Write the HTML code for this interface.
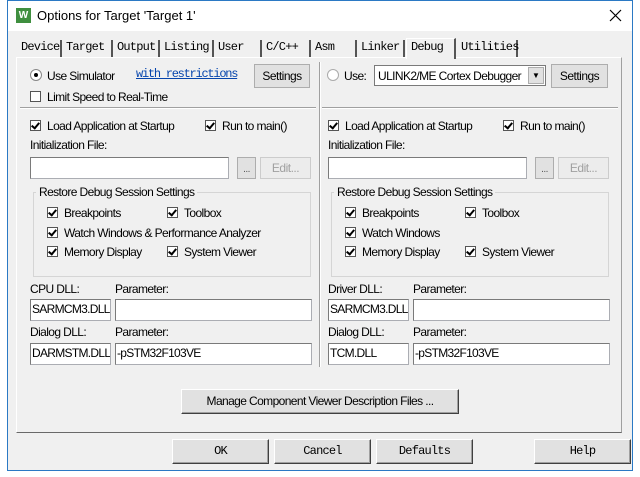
<!DOCTYPE html><html><head><style>
*{margin:0;padding:0;box-sizing:border-box}
body{width:640px;height:477px;background:#fff;position:relative;overflow:hidden;font-family:"Liberation Sans",sans-serif;font-size:12px;color:#000}
.a{position:absolute;white-space:nowrap}
.t{font-size:12px;letter-spacing:-0.6px;line-height:14px}
.m{font-family:"Liberation Mono",monospace;font-size:12px;line-height:14px;letter-spacing:-0.8px}
.in{background:#fff;border:1px solid #abadb3;border-top-color:#7a7a7a;border-left-color:#7a7a7a;position:absolute;padding:2px 1px;font-size:12px;letter-spacing:-0.7px;line-height:15px;overflow:hidden}
.btn{position:absolute;background:#e1e1e1;border:1px solid #adadad;text-align:center;font-size:12px;letter-spacing:-0.5px}
.cb{position:absolute;width:11px;height:11px;border:1px solid #555;background:#fff}
.cb.k::after{content:"";position:absolute;left:2px;top:0px;width:3px;height:6px;border-right:2px solid #000;border-bottom:2px solid #000;transform:rotate(40deg)}
.wb{position:absolute;background:#e1e1e1;border:1px solid #fff;border-right-color:#404040;border-bottom-color:#404040;box-shadow:inset -1px -1px #a0a0a0;text-align:center}
.tab{position:absolute;top:40px;height:17px;border-right:2px solid #555;padding-left:2px}
</style></head><body>
<div class="a" style="left:7px;top:0;width:626px;height:471px;background:#f0f0f0;border:1px solid #2b79c4"></div>
<div class="a" style="left:8px;top:1px;width:624px;height:30px;background:#fff"></div>
<div class="a" style="left:16px;top:8px;width:15px;height:15px;background:#3f8f3f;color:#fff;font-size:10px;font-weight:bold;text-align:center;line-height:15px">W</div>
<div class="a" style="left:37px;top:8px;font-size:13px;letter-spacing:0">Options for Target 'Target 1'</div>
<svg class="a" style="left:609px;top:9px" width="13" height="13"><path d="M1 1L12 12M12 1L1 12" stroke="#000" stroke-width="1.2"/></svg>

<div class="a" style="left:16px;top:57px;width:606px;height:376px;border:1px solid #fff;border-right-color:#a0a0a0;border-bottom-color:#696969"></div>
<div class="a m tab" style="left:19px;width:43px">Device</div>
<div class="a m tab" style="left:64px;width:49px">Target</div>
<div class="a m tab" style="left:115px;width:45px">Output</div>
<div class="a m tab" style="left:162px;width:52px">Listing</div>
<div class="a m tab" style="left:216px;width:46px">User</div>
<div class="a m tab" style="left:264px;width:47px">C/C++</div>
<div class="a m tab" style="left:313px;width:44px">Asm</div>
<div class="a m tab" style="left:359px;width:46px">Linker</div>
<div class="a m" style="left:406px;top:38px;width:50px;height:21px;background:#f0f0f0;border-right:2px solid #555;border-left:1px solid #fff;border-top:1px solid #fff;padding-left:4px;padding-top:1px">Debug</div>
<div class="a m tab" style="left:457px;width:61px;padding-left:4px">Utilities</div>

<div class="a" style="left:319px;top:62px;width:2px;height:305px;border-left:1px solid #a0a0a0;border-right:1px solid #fff"></div>
<div class="a" style="left:20px;top:107px;width:296px;height:2px;border-top:1px solid #a0a0a0;border-bottom:1px solid #fff"></div>
<div class="a" style="left:322px;top:107px;width:296px;height:2px;border-top:1px solid #a0a0a0;border-bottom:1px solid #fff"></div>

<div class="a" style="left:30px;top:69px;width:12px;height:12px;border:1px solid #888;border-radius:50%;background:#fff"><div style="position:absolute;left:3px;top:3px;width:4px;height:4px;border-radius:50%;background:#000"></div></div>
<div class="a t" style="left:47px;top:69px">Use Simulator</div>
<div class="a m" style="left:136px;top:67px;color:#0645ad;text-decoration:underline;letter-spacing:-1.25px">with restrictions</div>
<div class="btn" style="left:254px;top:64px;width:56px;height:24px;line-height:22px">Settings</div>
<div class="cb" style="left:30px;top:91px"></div>
<div class="a t" style="left:47px;top:90px">Limit Speed to Real-Time</div>

<div class="a" style="left:327px;top:69px;width:12px;height:12px;border:1px solid #aaa;border-radius:50%;background:#fff"></div>
<div class="a t" style="left:344px;top:69px">Use:</div>
<div class="a" style="left:374px;top:65px;width:172px;height:21px;background:#fff;border:1px solid #7a7a7a"><span class="t" style="position:absolute;left:3px;top:3px">ULINK2/ME Cortex Debugger</span><div style="position:absolute;right:1px;top:1px;width:16px;height:17px;background:#e1e1e1;border:1px solid #adadad;font-size:8px;text-align:center;line-height:15px">▼</div></div>
<div class="btn" style="left:551px;top:64px;width:57px;height:24px;line-height:22px">Settings</div>

<div class="a" style="left:0;top:0">
<div class="cb k" style="left:30px;top:120px"></div><div class="a t" style="left:47px;top:119px">Load Application at Startup</div>
<div class="cb k" style="left:205px;top:120px"></div><div class="a t" style="left:222px;top:119px">Run to main()</div>
<div class="a t" style="left:30px;top:138px">Initialization File:</div>
<div class="in" style="left:30px;top:157px;width:199px;height:22px"></div>
<div class="btn" style="left:237px;top:157px;width:19px;height:22px;line-height:24px;font-size:10px;color:#555">...</div>
<div class="btn" style="left:260px;top:157px;width:51px;height:22px;line-height:20px;color:#a0a0a0;background:#ececec;border-color:#ccc">Edit...</div>
<div class="a" style="left:33px;top:192px;width:278px;height:85px;border:1px solid #d5d5d5"></div>
<div class="a t" style="left:36px;top:185px;background:#f0f0f0;padding:0 3px">Restore Debug Session Settings</div>
<div class="cb k" style="left:47px;top:207px"></div><div class="a t" style="left:64px;top:206px">Breakpoints</div>
<div class="cb k" style="left:167px;top:207px"></div><div class="a t" style="left:184px;top:206px">Toolbox</div>
<div class="cb k" style="left:47px;top:227px"></div><div class="a t" style="left:64px;top:226px">Watch Windows &amp; Performance Analyzer</div>
<div class="cb k" style="left:47px;top:246px"></div><div class="a t" style="left:64px;top:245px">Memory Display</div>
<div class="cb k" style="left:167px;top:246px"></div><div class="a t" style="left:184px;top:245px">System Viewer</div>
<div class="a t" style="left:30px;top:282px">CPU DLL:</div><div class="a t" style="left:115px;top:282px">Parameter:</div>
<div class="in" style="left:30px;top:299px;width:81px;height:22px">SARMCM3.DLL</div>
<div class="in" style="left:115px;top:299px;width:197px;height:22px"></div>
<div class="a t" style="left:30px;top:325px">Dialog DLL:</div><div class="a t" style="left:115px;top:325px">Parameter:</div>
<div class="in" style="left:30px;top:343px;width:81px;height:22px">DARMSTM.DLL</div>
<div class="in" style="left:115px;top:343px;width:197px;height:22px">-pSTM32F103VE</div>
</div>
<div class="a" style="left:298px;top:0">
<div class="cb k" style="left:30px;top:120px"></div><div class="a t" style="left:47px;top:119px">Load Application at Startup</div>
<div class="cb k" style="left:205px;top:120px"></div><div class="a t" style="left:222px;top:119px">Run to main()</div>
<div class="a t" style="left:30px;top:138px">Initialization File:</div>
<div class="in" style="left:30px;top:157px;width:199px;height:22px"></div>
<div class="btn" style="left:237px;top:157px;width:19px;height:22px;line-height:24px;font-size:10px;color:#555">...</div>
<div class="btn" style="left:260px;top:157px;width:51px;height:22px;line-height:20px;color:#a0a0a0;background:#ececec;border-color:#ccc">Edit...</div>
<div class="a" style="left:33px;top:192px;width:278px;height:85px;border:1px solid #d5d5d5"></div>
<div class="a t" style="left:36px;top:185px;background:#f0f0f0;padding:0 3px">Restore Debug Session Settings</div>
<div class="cb k" style="left:47px;top:207px"></div><div class="a t" style="left:64px;top:206px">Breakpoints</div>
<div class="cb k" style="left:167px;top:207px"></div><div class="a t" style="left:184px;top:206px">Toolbox</div>
<div class="cb k" style="left:47px;top:227px"></div><div class="a t" style="left:64px;top:226px">Watch Windows</div>
<div class="cb k" style="left:47px;top:246px"></div><div class="a t" style="left:64px;top:245px">Memory Display</div>
<div class="cb k" style="left:167px;top:246px"></div><div class="a t" style="left:184px;top:245px">System Viewer</div>
<div class="a t" style="left:30px;top:282px">Driver DLL:</div><div class="a t" style="left:115px;top:282px">Parameter:</div>
<div class="in" style="left:30px;top:299px;width:81px;height:22px">SARMCM3.DLL</div>
<div class="in" style="left:115px;top:299px;width:197px;height:22px"></div>
<div class="a t" style="left:30px;top:325px">Dialog DLL:</div><div class="a t" style="left:115px;top:325px">Parameter:</div>
<div class="in" style="left:30px;top:343px;width:81px;height:22px">TCM.DLL</div>
<div class="in" style="left:115px;top:343px;width:197px;height:22px">-pSTM32F103VE</div>
</div>

<div class="wb t" style="left:181px;top:389px;width:278px;height:25px;line-height:23px">Manage Component Viewer Description Files ...</div>
<div class="wb m" style="left:172px;top:439px;width:97px;height:25px;line-height:23px">OK</div>
<div class="wb m" style="left:274px;top:439px;width:97px;height:25px;line-height:23px">Cancel</div>
<div class="wb m" style="left:376px;top:439px;width:97px;height:25px;line-height:23px">Defaults</div>
<div class="wb m" style="left:534px;top:439px;width:97px;height:25px;line-height:23px">Help</div>
</body></html>
